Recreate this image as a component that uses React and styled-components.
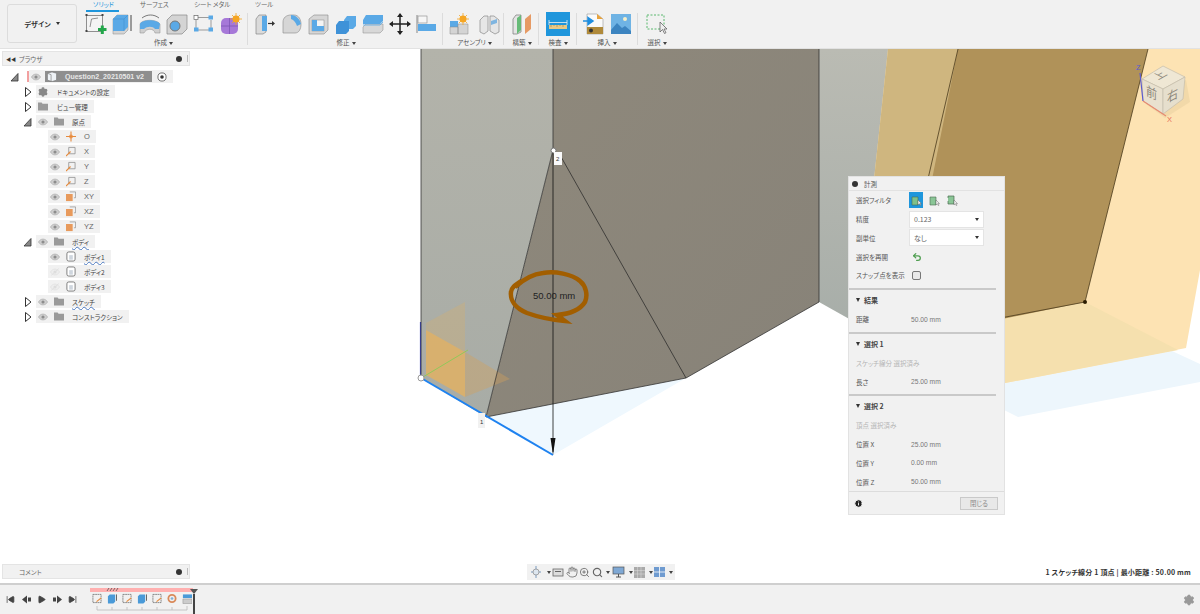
import React from "react";
import styled, { createGlobalStyle } from "styled-components";
import { SkipBack, SkipForward, Play, Settings, Info, Undo2, Hand, ZoomIn, Search } from "lucide-react";

const Global = createGlobalStyle`
  html, body { margin: 0; padding: 0; height: 100%; overflow: hidden; }
  #root { height: 100%; }
  * { box-sizing: border-box; }
  body {
    font-family: "Noto Sans CJK JP", "Liberation Sans", sans-serif;
    font-feature-settings: "palt";
    color: #444;
    background: #fff;
  }
`;

const Page = styled.div`
  width: 1200px;
  height: 614px;
  display: flex;
  flex-direction: column;
`;

/* ---------- toolbar ---------- */
const TopBar = styled.div`
  height: 49px;
  background: #f1f1f1;
  border-bottom: 1px solid #e2e2e2;
  display: flex;
  padding-left: 7px;
  flex: none;
  position: relative;
`;
const DesignBtn = styled.div`
  width: 70px;
  height: 39px;
  margin-top: 4px;
  margin-right: 8px;
  border: 1px solid #dcdcdc;
  border-radius: 3px;
  display: flex;
  align-items: center;
  justify-content: center;
  font-size: 7px;
  font-weight: 700;
  color: #333;
  gap: 3px;
`;
const Group = styled.div`
  display: flex;
  flex-direction: column;
  align-items: center;
  padding: 0 ${(p) => p.$pr}px 0 ${(p) => p.$pl}px;
  border-right: ${(p) => (p.$last ? "none" : "1px solid #dcdcdc")};
  margin-top: 13px;
  height: 32px;
`;
const IconRow = styled.div`
  display: flex;
  gap: ${(p) => p.$gap ?? 5}px;
  height: 22px;
  align-items: center;
`;
const GroupLabel = styled.div`
  font-size: 6.5px;
  line-height: 9px;
  color: #555;
  margin-top: 3px;
  white-space: nowrap;
`;
const Tabs = styled.div`
  position: absolute;
  top: 0;
  left: 86px;
  display: flex;
  font-size: 6.5px;
  line-height: 9px;
`;
const Tab = styled.div`
  width: ${(p) => p.$w}px;
  color: ${(p) => (p.$on ? "#1f96dc" : "#666")};
  padding-left: ${(p) => p.$pl ?? 0}px;
  & > i {
    display: block;
    width: 33px;
    height: 2px;
    background: #1f96dc;
    margin: 1px 0 0 -${(p) => p.$pl ?? 0}px;
  }
`;
const Caret = styled.span`
  display: inline-block;
  width: 0;
  height: 0;
  border-left: 2px solid transparent;
  border-right: 2px solid transparent;
  border-top: 3px solid ${(p) => p.$c ?? "#444"};
  margin-left: 2px;
  vertical-align: middle;
`;
const InspectIcon = styled.svg`
  width: 24px;
  height: 24px;
  margin-top: -1px;
`;

/* ---------- viewport ---------- */
const Viewport = styled.div`
  flex: 1;
  position: relative;
  background: #fff;
  overflow: hidden;
`;
const Scene = styled.svg`
  position: absolute;
  left: 0;
  top: 0;
  width: 1200px;
  height: 535px;
`;
const PanelBar = styled.div`
  position: absolute;
  left: 2px;
  width: 188px;
  height: 15px;
  background: #f1f1f1;
  border: 1px solid #e4e4e4;
  display: flex;
  align-items: center;
  padding: 0 1px 0 3px;
  font-size: 6.5px;
  color: #666;
  top: ${(p) => p.$top}px;
`;
const Collapse = styled.span`
  width: 13px;
  font-size: 5px;
  color: #333;
`;
const Dot = styled.span`
  width: 6px;
  height: 6px;
  border-radius: 50%;
  background: #333;
  margin-left: auto;
  margin-right: 5px;
`;
const Handle = styled.span`
  width: 1px;
  height: 7px;
  background: #bbb;
`;
const Tree = styled.div`
  position: absolute;
  left: 10px;
  top: 21px;
  display: flex;
  flex-direction: column;
  gap: 2px;
`;
const Row = styled.div`
  display: flex;
  align-items: center;
  height: 13px;
  padding-left: ${(p) => p.$indent}px;
`;
const Arrow = styled.svg`
  width: 10px;
  height: 12px;
  flex: none;
  margin-right: 3px;
`;
const Pin = styled.span`
  width: 2px;
  height: 11px;
  background: #f2a0a0;
  margin-left: 4px;
`;
const Pill = styled.div`
  display: flex;
  align-items: center;
  height: 13px;
  background: #f1f1f1;
  padding: 0 6px 0 2px;
  gap: 6px;
  font-size: 6.5px;
  color: #444;
  white-space: nowrap;
`;
const RowText = styled.span`
  margin-left: ${(p) => p.$ml ?? 2}px;
  font-family: ${(p) => (p.$latin ? '"Liberation Sans", sans-serif' : "inherit")};
  font-size: ${(p) => (p.$latin ? "7.5px" : "6.5px")};
  color: ${(p) => (p.$latin ? "#666" : "#444")};
  text-decoration: ${(p) => (p.$err ? "underline wavy #4a78c0 0.6px" : "none")};
`;
const RootName = styled.div`
  background: #8e8e8e;
  color: #e8e8e8;
  font-family: "Liberation Sans", sans-serif;
  font-size: 7px;
  font-weight: 700;
  height: 11px;
  width: 107px;
  display: flex;
  align-items: center;
  gap: 7px;
  padding-left: 1px;
  white-space: nowrap;
  margin-left: -2px;
  margin-right: -1px;
`;

/* measure dialog */
const Dialog = styled.div`
  position: absolute;
  left: 848px;
  top: 127px;
  width: 157px;
  height: 339px;
  background: #f1f1f1;
  border: 1px solid #e2e2e2;
  font-size: 6.5px;
  color: #555;
`;
const DialogHead = styled.div`
  height: 14px;
  display: flex;
  align-items: center;
  padding-left: 3px;
  gap: 6px;
  border-bottom: 1px solid #e2e2e2;
  & > span:first-child {
    width: 6px;
    height: 6px;
    border-radius: 50%;
    background: #333;
  }
`;
const FieldRow = styled.div`
  height: 18.75px;
  display: flex;
  align-items: center;
  padding-left: 7px;
  white-space: nowrap;
  & > label {
    width: ${(p) => (p.$wide ? "auto" : "54px")};
    flex: none;
  }
`;
const Value = styled.span`
  color: #777;
  font-family: "Liberation Sans", sans-serif;
  font-size: 6.7px;
  margin-left: 1px;
`;
const Select = styled.div`
  width: 75px;
  height: 17px;
  background: #fff;
  border: 1px solid #e4e4e4;
  display: flex;
  align-items: center;
  justify-content: space-between;
  padding: 0 4px;
  color: #666;
  font-size: 7px;
  margin-left: -1px;
`;
const Divider = styled.div`
  height: 2px;
  width: 147px;
  margin-top: 3px;
  background: #c9c9c9;
`;
const SectionHead = styled.div`
  height: 20px;
  display: flex;
  align-items: center;
  padding-left: 7px;
  font-weight: 700;
  font-size: 7px;
  color: #444;
  gap: 4px;
`;
const Tri = styled.span`
  width: 0;
  height: 0;
  border-left: 2.5px solid transparent;
  border-right: 2.5px solid transparent;
  border-top: 4px solid #333;
`;
const Muted = styled(FieldRow)`
  color: #b5b5b5;
`;
const DialogFoot = styled.div`
  position: absolute;
  left: 0;
  right: 0;
  bottom: 0;
  height: 23px;
  border-top: 1px solid #dcdcdc;
  display: flex;
  align-items: center;
  justify-content: space-between;
  padding: 0 6px 0 5px;
`;
const CloseBtn = styled.div`
  width: 38px;
  height: 13px;
  border: 1px solid #c9c9c9;
  background: #e8e8e8;
  color: #888;
  display: flex;
  align-items: center;
  justify-content: center;
`;
const FilterIcons = styled.div`
  display: flex;
  gap: 4px;
  margin-left: -1px;
  align-items: center;
`;
const FilterBtn = styled.div`
  width: 14px;
  height: 16px;
  display: flex;
  align-items: center;
  justify-content: center;
  background: ${(p) => (p.$on ? "#1f96dc" : "transparent")};
`;
const Check = styled.span`
  width: 9px;
  height: 9px;
  border: 1px solid #777;
  border-radius: 2px;
  background: #e8e8e8;
  margin-left: 2px;
`;
const Restart = styled(Undo2)`
  margin-left: 2px;
`;
const NavBar = styled.div`
  position: absolute;
  left: 527px;
  top: 515px;
  width: 148px;
  height: 16px;
  background: #f1f1f1;
  display: flex;
  align-items: center;
  justify-content: space-between;
  padding: 0 2px;
  color: #666;
`;
const Status = styled.div`
  position: absolute;
  right: 9px;
  top: 518px;
  font-size: 7px;
  font-weight: 700;
  color: #333;
  letter-spacing: 0.2px;
`;
const DimLabel = styled.text`
  font-family: "Liberation Sans", sans-serif;
  font-size: 9.5px;
  fill: #222;
`;

/* ---------- timeline ---------- */
const TimeBar = styled.div`
  height: 31px;
  flex: none;
  background: #f1f1f1;
  border-top: 2px solid #cfcfcf;
  display: flex;
  align-items: center;
  padding: 0 5px 0 6px;
`;
const Transport = styled.div`
  display: flex;
  gap: 6.5px;
  color: #444;
  align-items: center;
  width: 84px;
`;
const Track = styled.div`
  position: relative;
  width: 110px;
  height: 28px;
`;
const TrackRow = styled.div`
  position: absolute;
  left: 2px;
  top: 7px;
  display: flex;
  gap: 5px;
`;
const Head = styled.div`
  position: absolute;
  left: 100px;
  top: 3px;
  width: 8px;
  height: 25px;
  display: flex;
  flex-direction: column;
  align-items: center;
  &::before {
    content: "";
    border-left: 4px solid transparent;
    border-right: 4px solid transparent;
    border-top: 5px solid #555;
  }
  &::after {
    content: "";
    width: 2px;
    flex: 1;
    background: #444;
  }
`;
const Gear = styled.div`
  margin-left: auto;
  color: #999;
  display: flex;
`;

const Eye = ({ off }) => (
  <svg width="10" height="8" viewBox="0 0 11 8">
    <path d="M.5 4C2 1.6 3.6.8 5.5.8S9 1.6 10.5 4C9 6.4 7.4 7.2 5.5 7.2S2 6.4.5 4Z" fill={off ? "#eee" : "#cfcfcf"} stroke={off ? "#ddd" : "#aaa"} strokeWidth=".7" />
    <circle cx="5.5" cy="4" r="1.7" fill={off ? "#ddd" : "#8d8d8d"} />
    {off && <path d="M1.5 7.5 9.5.5" stroke="#ddd" />}
  </svg>
);
const Folder = () => (
  <svg width="10" height="9" viewBox="0 0 11 9">
    <path d="M0 0h4l1 1.5h6V9H0Z" fill="#9a9a9a" />
  </svg>
);
const Expand = ({ open }) => (
  <Arrow viewBox="0 0 10 12">
    {open ? (
      <path d="M1 10 8 2.5V10Z" fill="#888" stroke="#333" strokeWidth=".8" />
    ) : (
      <path d="M2.5 1.5 8 6 2.5 10.5Z" fill="#fff" stroke="#333" strokeWidth="1" />
    )}
  </Arrow>
);
const Origin = () => (
  <svg width="10" height="11" viewBox="0 0 11 11">
    <circle cx="5.5" cy="5.5" r="2.2" fill="#f0a060" />
    <path d="M5.5 0v11M0 5.5h11" stroke="#e68a3c" strokeWidth="1.2" />
  </svg>
);
const Axis = () => (
  <svg width="10" height="11" viewBox="0 0 11 11">
    <path d="M3 1h7v7H3Z" fill="none" stroke="#888" strokeWidth=".8" />
    <path d="M0 10.5 5 5.5" stroke="#e68a3c" strokeWidth="1.2" />
  </svg>
);
const PlaneIcon = () => (
  <svg width="10" height="11" viewBox="0 0 12 12">
    <path d="M4.5.5h7v7h-2" fill="none" stroke="#888" strokeWidth=".8" />
    <rect x="0" y="3" width="8" height="8.5" fill="#e89a5c" />
  </svg>
);
const BodyIcon = () => (
  <svg width="10" height="11" viewBox="0 0 11 11">
    <rect x="1" y=".5" width="9" height="10" rx="2" fill="#fff" stroke="#555" strokeWidth=".8" />
    <rect x="3.5" y="4" width="4" height="5" fill="#cfd6de" />
  </svg>
);
const CubeDoc = () => (
  <svg width="12" height="11" viewBox="0 0 12 12">
    <path d="M1 2.5 6 1l5 1.5V10L6 11.5 1 10Z" fill="#eef2f6" stroke="#777" strokeWidth=".7" />
    <path d="M1 2.5 5 4v7.5" fill="none" stroke="#777" strokeWidth=".7" />
  </svg>
);
const Radio = () => (
  <svg width="10" height="10" viewBox="0 0 11 11">
    <circle cx="5.5" cy="5.5" r="4.5" fill="#fff" stroke="#444" strokeWidth=".8" />
    <circle cx="5.5" cy="5.5" r="2" fill="#333" />
  </svg>
);

const blue = "#5aa9e6";
const ToolIcon = ({ children, w = 22 }) => (
  <svg width={w} height="22" viewBox={`0 0 ${w} 22`}>
    {children}
  </svg>
);

const Toolbar = () => (
  <TopBar>
    <DesignBtn>
      デザイン <Caret $c="#333" />
    </DesignBtn>
    <Tabs>
      <Tab $on $w="54" $pl="7">ソリッド<i /></Tab>
      <Tab $w="54">サーフェス</Tab>
      <Tab $w="61">シート メタル</Tab>
      <Tab $w="40">ツール</Tab>
    </Tabs>
    <Group $pl={0} $pr={5}>
      <IconRow>
        <ToolIcon>
          <rect x="1.5" y="2.5" width="16" height="16" fill="#f4f4f4" stroke="#666" strokeWidth=".7" />
          <path d="M5 14 6.5 6 13 5" fill="none" stroke="#666" strokeWidth=".7" />
          <path d="M.5 1h2v2h-2ZM16.5 1h2v2h-2ZM.5 17h2v2h-2Z" fill="#444" />
          <path d="M13 16.5h8.5M17.3 12.5v8.5" stroke="#22a64a" strokeWidth="3" />
        </ToolIcon>
        <ToolIcon>
          <path d="M1 6 5 2h11v15l-4 4H1Z" fill="#d4d4d4" stroke="#888" strokeWidth=".5" />
          <path d="M1 6 5 2h11v12l-4 4H1Z" fill={blue} />
          <path d="M12 6H1M12 6l4-4M12 6v12" stroke="#3d88c8" strokeWidth=".5" fill="none" />
          <path d="M19 2v16" stroke="#444" strokeWidth="1" />
        </ToolIcon>
        <ToolIcon>
          <path d="M1 11c2-5 17-5 20 0v9h-5c-1-5-9-5-11 0H1Z" fill="#cfcfcf" stroke="#888" strokeWidth=".5" />
          <path d="M1 11c2-5 17-5 20 0l-1 5h-4c-2-3-8-3-11 0H1Z" fill={blue} />
          <path d="M3 5c5-4 12-4 17 0" fill="none" stroke="#444" strokeWidth=".7" />
        </ToolIcon>
        <ToolIcon>
          <path d="M1 7 6 2h15v14l-5 5H1Z" fill="#d4d4d4" stroke="#888" strokeWidth=".7" />
          <circle cx="9" cy="13" r="5" fill={blue} stroke="#777" strokeWidth="1" />
        </ToolIcon>
        <ToolIcon>
          <path d="M5 4.5h11M3 7v8M18 7v8M5 17h11" stroke="#777" strokeWidth=".7" />
          <rect x="1" y="2.5" width="4" height="4" fill="#fff" stroke="#666" strokeWidth=".7" />
          <rect x="15.5" y="2.5" width="4.5" height="4" fill={blue} />
          <rect x="1" y="14.5" width="4.5" height="4" fill={blue} />
          <rect x="15.5" y="14.5" width="4.5" height="4" fill={blue} />
        </ToolIcon>
        <ToolIcon>
          <rect x="1" y="5" width="17" height="16" rx="5" fill="#a678d8" />
          <path d="M9.5 5v16M1 13h17" stroke="#7f55b5" strokeWidth=".8" />
          <circle cx="16" cy="6" r="3.5" fill="#f5a623" />
          <path d="M16 0v12M10 6h12M12 2l8 8M20 2l-8 8" stroke="#f5a623" strokeWidth=".8" />
        </ToolIcon>
      </IconRow>
      <GroupLabel>作成<Caret /></GroupLabel>
    </Group>
    <Group $pl={6} $pr={4}>
      <IconRow>
        <ToolIcon>
          <path d="M2 6 5 2h7v17l-3 2H2Z" fill="#dadada" stroke="#777" strokeWidth=".6" />
          <path d="M8 3h5v15H8Z" fill={blue} />
          <path d="M14 10.5h6" stroke="#333" strokeWidth="1.2" />
          <path d="m18 8 3 2.5-3 2.5Z" fill="#333" />
        </ToolIcon>
        <ToolIcon>
          <path d="M2 20V9c0-4 3-7 8-7h3c5 0 7 5 7 9 0 5-2 9-6 9Z" fill="#d6d6d6" stroke="#888" strokeWidth=".6" />
          <path d="M10 2c5 0 9 4 10 9l-4 2c-1-3-3-6-6-7Z" fill={blue} />
        </ToolIcon>
        <ToolIcon>
          <path d="M1 6 6 2h14v15l-4 4H1Z" fill="#d6d6d6" stroke="#888" strokeWidth=".6" />
          <rect x="4" y="7" width="12" height="11" fill="#f4f4f4" stroke="#888" strokeWidth=".5" />
          <path d="M4 7h5v6h7v5H4Z" fill={blue} />
        </ToolIcon>
        <ToolIcon>
          <path d="M9 7 12 3h9v10l-3 3H9Z" fill={blue} />
          <path d="M1 12 4 8h10v10l-3 3H1Z" fill="#3f92d8" />
        </ToolIcon>
        <ToolIcon>
          <path d="M1 14 4 11h17v6l-3 3H1Z" fill="#d8d8d8" stroke="#888" strokeWidth=".5" />
          <path d="M1 7 4 2h17v6l-3 3H1Z" fill={blue} />
          <path d="M1 12h17l3-3" fill="none" stroke={blue} strokeWidth=".8" />
        </ToolIcon>
        <ToolIcon>
          <path d="M11 1v20M1 11h20" stroke="#222" strokeWidth="1.5" />
          <path d="m11 0 3 4H8ZM11 22l-3-4h6ZM0 11l4-3v6ZM22 11l-4 3V8Z" fill="#222" />
        </ToolIcon>
        <ToolIcon>
          <path d="M1 2v18" stroke="#999" strokeWidth="1.2" />
          <rect x="2" y="3" width="9" height="7" fill="#f6f6f6" stroke="#888" strokeWidth=".6" />
          <rect x="2" y="11" width="18" height="7" fill={blue} />
        </ToolIcon>
      </IconRow>
      <GroupLabel>修正<Caret /></GroupLabel>
    </Group>
    <Group $pl={6} $pr={3}>
      <IconRow $gap={7}>
        <ToolIcon>
          <path d="M1 8h8v6H1Z" fill={blue} />
          <path d="M1 14h8v7H1ZM9 11h10v10H9Z" fill="#d4d4d4" stroke="#888" strokeWidth=".5" />
          <circle cx="14" cy="6" r="3.5" fill="#f5a623" />
          <path d="M14 0v12M8 6h12M10 2l8 8M18 2l-8 8" stroke="#f5a623" strokeWidth=".8" />
        </ToolIcon>
        <ToolIcon>
          <path d="M2 7 6 3h4v15L6 21l-4-2ZM12 3h4l5 4v12l-4 2-5-3Z" fill="#e6e6e6" stroke="#888" strokeWidth=".7" />
          <path d="M13 8l6-2v4l-6 2Z" fill="#7fb5e0" />
        </ToolIcon>
      </IconRow>
      <GroupLabel>アセンブリ<Caret /></GroupLabel>
    </Group>
    <Group $pl={8} $pr={6}>
      <IconRow>
        <ToolIcon w={20}>
          <path d="M1 6 4 2h5v17l-4 2H1Z" fill="#e4e4e4" stroke="#777" strokeWidth=".7" />
          <path d="M5 5 9 2v15l-4 4Z" fill="#66bb77" />
          <path d="M13 6 19 1v15l-6 5Z" fill="#e69a64" />
        </ToolIcon>
      </IconRow>
      <GroupLabel>構築<Caret /></GroupLabel>
    </Group>
    <Group $pl={7} $pr={6}>
      <IconRow>
        <InspectIcon viewBox="0 0 24 24">
          <rect width="24" height="24" fill="#1f96dc" />
          <path d="M3 8v5M21 8v5M3 10.5h18" stroke="#eee" strokeWidth=".8" />
          <rect x="3" y="13" width="18" height="4" fill="#e7c986" />
          <path d="M5 13v2M8 13v1M11 13v2M14 13v1M17 13v2" stroke="#8a6f3a" strokeWidth=".5" />
        </InspectIcon>
      </IconRow>
      <GroupLabel>検査<Caret /></GroupLabel>
    </Group>
    <Group $pl={6} $pr={6}>
      <IconRow $gap={6}>
        <ToolIcon>
          <path d="M4 1h10l6 5v15H4Z" fill="#fafafa" stroke="#999" strokeWidth=".6" />
          <path d="M14 1v5h6Z" fill="#e8a33c" />
          <rect x="4" y="14" width="16" height="7" fill="#b08a3a" />
          <circle cx="8" cy="17.5" r="2" fill="#333" />
          <path d="M0 8h7M5 4.5 10 8l-5 3.5Z" fill="#1f8ee0" stroke="#1f8ee0" strokeWidth="1.5" />
        </ToolIcon>
        <svg width="20" height="20" viewBox="0 0 20 20">
          <rect width="20" height="20" fill="#6fb3e4" />
          <path d="M0 16 6 9l5 5 3-2 6 5v3H0Z" fill="#3c84c0" />
          <circle cx="14" cy="5" r="2" fill="#f6efc8" />
        </svg>
      </IconRow>
      <GroupLabel>挿入<Caret /></GroupLabel>
    </Group>
    <Group $pl={8} $pr={8} $last>
      <IconRow>
        <ToolIcon>
          <rect x="1" y="2" width="17" height="14" fill="none" stroke="#5ab86e" strokeDasharray="2 1.5" />
          <path d="M14 9v10l2.500-2.500 2 4 1.500-.8-2-3.700H21Z" fill="#eee" stroke="#555" strokeWidth=".7" />
        </ToolIcon>
      </IconRow>
      <GroupLabel>選択<Caret /></GroupLabel>
    </Group>
  </TopBar>
);

const Model = () => (
  <Scene viewBox="0 49 1200 535">
    <defs>
      <linearGradient id="left" x1="0" y1="0" x2="0" y2="1">
        <stop offset="0" stopColor="#b3b3aa" />
        <stop offset="1" stopColor="#a8aca6" />
      </linearGradient>
      <linearGradient id="wall" x1="0" y1="0" x2="0" y2="1">
        <stop offset="0" stopColor="#babbb3" />
        <stop offset="1" stopColor="#a8aea9" />
      </linearGradient>
      <linearGradient id="mid" x1="0" y1="0" x2="1" y2="1">
        <stop offset="0" stopColor="#8f897c" />
        <stop offset="1" stopColor="#878278" />
      </linearGradient>
    </defs>
    {/* ground plane tint */}
    <path d="M1172 351 1200 364V382L1018 417 1000 408V384Z" fill="#edf6fc" />
    <path d="M486 417 686 378 553 455Z" fill="#eff8fe" />
    {/* grey wall */}
    <path d="M819 49H890L860 325 819 302Z" fill="url(#wall)" />
    {/* yellow plane */}
    <path d="M888 49H1200V270L1186 348 1000 384 850 400 860 310Z" fill="#fde3b3" />
    <path d="M1085 302 1178 350 1000 384 1000 317Z" fill="#f5e0ae" />
    <path d="M888 49H960V340L850 340 860 310Z" fill="#cfb67f" />
    {/* dark and light faces */}
    <path d="M553 49H819V302L686 378 486 417 553 150Z" fill="url(#mid)" />
    <path d="M421 49H553V150L486 417 421 378Z" fill="url(#left)" />
    {/* brown face */}
    <path d="M958 49H1148L1085 302 900 340Z" fill="#b09259" />
    <path d="M958 49 900 300M1148 49 1085 302 990 320" fill="none" stroke="#4a3a1c" strokeWidth=".8" />
    {/* origin widget */}
    <path d="M426 323 465 302V352L426 330Z" fill="#d9b068" opacity=".3" />
    <path d="M426 330 465 352V397L426 375Z" fill="#e0b064" opacity=".85" />
    <path d="M465 352 510 379 465 397Z" fill="#d3a05c" opacity=".4" />
    <path d="M423 377 468 350" stroke="#92c85a" strokeWidth="1" />
    <path d="M420.5 322V378" stroke="#3c46c8" strokeWidth="1.2" />
    {/* edges */}
    <path d="M421 49V378M553 49V150M819 49V302L686 378 486 417" fill="none" stroke="#333" strokeWidth=".8" />
    <path d="M553 150 486 417M560 155 686 378" fill="none" stroke="#222" strokeWidth=".7" />
    <path d="M421 378 553 455" stroke="#1e82f0" strokeWidth="2" />
    <path d="M553 150V452" stroke="#111" strokeWidth=".8" />
    <path d="m553 455-2.5-17h5Z" fill="#111" />
    <circle cx="421" cy="378" r="3" fill="#fff" stroke="#999" />
    <circle cx="553.5" cy="150.5" r="2.5" fill="#fff" stroke="#777" />
    <circle cx="1085" cy="302" r="2" fill="#2a1c00" />
    {/* hand-drawn circle */}
    <path d="M521 281C515 285 511 288 511 292 510 300 515 308 527 313 538 317 553 320 565 321L557 315C568 314 580 310 585 302 588 295 586 286 580 281 572 274 555 271 543 273 533 274 525 278 515 287" fill="none" stroke="#a25e00" strokeWidth="4.5" />
    <DimLabel x="533" y="298.5">50.00 mm</DimLabel>
    {/* point tags */}
    <rect x="554" y="152" width="8" height="13" fill="#fafafa" />
    <text x="556" y="161" fontSize="6" fontFamily="Liberation Sans" fill="#333">2</text>
    <rect x="478" y="413" width="7" height="15" fill="#f1f1f1" />
    <text x="480" y="424" fontSize="6" fontFamily="Liberation Sans" fill="#333">1</text>
    {/* view cube */}
    <path d="M1146 104 1165 118 1190 102 1186 80Z" fill="#e8cf9f" opacity=".5" />
    <path d="M1142 79 1163 66 1185 77 1163 89Z" fill="#efe7d4" stroke="#c4bdac" strokeWidth=".7" />
    <path d="M1142 79 1163 89 1163 114 1143 101Z" fill="#e9e1cf" stroke="#c4bdac" strokeWidth=".7" />
    <path d="M1163 89 1185 77 1183 99 1163 114Z" fill="#e6dfcd" stroke="#c4bdac" strokeWidth=".7" />
    <text transform="matrix(.9 -.5 .9 .45 1158 80)" fontSize="11" fill="#8d877a" fontFamily="Noto Sans CJK JP">上</text>
    <text transform="matrix(.85 .4 0 1 1146 95)" fontSize="13" fill="#8d877a" fontFamily="Noto Sans CJK JP">前</text>
    <text transform="matrix(.85 -.45 0 1 1167 103)" fontSize="13" fill="#8d877a" fontFamily="Noto Sans CJK JP">右</text>
    <path d="M1140 73 1143 101" stroke="#5a5ad0" strokeWidth="1.2" />
    <path d="M1143 101 1166 116" stroke="#e88a70" strokeWidth="1.2" />
    <text x="1136" y="70" fontSize="7.5" fill="#5a5ad0" fontFamily="Liberation Sans">Z</text>
    <text x="1167" y="122" fontSize="7.5" fill="#e8705a" fontFamily="Liberation Sans">X</text>
  </Scene>
);

const BrowserTree = () => (
  <Tree>
    <Row $indent={0}>
      <Expand open />
      <Pin />
      <Pill>
        <Eye />
        <RootName><CubeDoc />Question2_20210501 v2</RootName>
        <Radio />
      </Pill>
    </Row>
    <Row $indent={13}>
      <Expand />
      <Pill><Settings size={10} color="#888" strokeWidth={3} fill="#888" /><RowText $ml={3}>ドキュメントの設定</RowText></Pill>
    </Row>
    <Row $indent={13}>
      <Expand />
      <Pill><Folder /><RowText $ml={3}>ビュー管理</RowText></Pill>
    </Row>
    <Row $indent={13}>
      <Expand open />
      <Pill><Eye /><Folder /><RowText>原点</RowText></Pill>
    </Row>
    <Row $indent={38}><Pill><Eye /><Origin /><RowText $latin>O</RowText></Pill></Row>
    <Row $indent={38}><Pill><Eye /><Axis /><RowText $latin>X</RowText></Pill></Row>
    <Row $indent={38}><Pill><Eye /><Axis /><RowText $latin>Y</RowText></Pill></Row>
    <Row $indent={38}><Pill><Eye /><Axis /><RowText $latin>Z</RowText></Pill></Row>
    <Row $indent={38}><Pill><Eye /><PlaneIcon /><RowText $latin>XY</RowText></Pill></Row>
    <Row $indent={38}><Pill><Eye /><PlaneIcon /><RowText $latin>XZ</RowText></Pill></Row>
    <Row $indent={38}><Pill><Eye /><PlaneIcon /><RowText $latin>YZ</RowText></Pill></Row>
    <Row $indent={13}>
      <Expand open />
      <Pill><Eye /><Folder /><RowText $err>ボディ</RowText></Pill>
    </Row>
    <Row $indent={38}><Pill><Eye /><BodyIcon /><RowText $err>ボディ1</RowText></Pill></Row>
    <Row $indent={38}><Pill><Eye off /><BodyIcon /><RowText>ボディ2</RowText></Pill></Row>
    <Row $indent={38}><Pill><Eye off /><BodyIcon /><RowText>ボディ3</RowText></Pill></Row>
    <Row $indent={13}>
      <Expand />
      <Pill><Eye /><Folder /><RowText $err>スケッチ</RowText></Pill>
    </Row>
    <Row $indent={13}>
      <Expand />
      <Pill><Eye /><Folder /><RowText>コンストラクション</RowText></Pill>
    </Row>
  </Tree>
);

const FilterIcon = ({ on, kind }) => (
  <svg width="11" height="11" viewBox="0 0 11 11">
    {kind === "edge" ? (
      <path d="M1 3V1h6v8H1V6" fill="#8ac596" stroke="#4a6b50" strokeWidth=".7" />
    ) : (
      <path d="M1 2h6v8H1Z" fill={on ? "#7fc08a" : "#8ac596"} stroke="#4a6b50" strokeWidth=".6" />
    )}
    <path d="M7 5v5l1.3-1.2 1 1.800.7-.4-.9-1.700H10.500Z" fill="#eee" stroke="#555" strokeWidth=".4" />
  </svg>
);

const Measure = () => (
  <Dialog>
    <DialogHead><span />計測</DialogHead>
    <FieldRow>
      <label>選択フィルタ</label>
      <FilterIcons>
        <FilterBtn $on><FilterIcon on /></FilterBtn>
        <FilterBtn><FilterIcon /></FilterBtn>
        <FilterBtn><FilterIcon kind="edge" /></FilterBtn>
      </FilterIcons>
    </FieldRow>
    <FieldRow><label>精度</label><Select>0.123<Caret $c="#333" /></Select></FieldRow>
    <FieldRow><label>副単位</label><Select>なし<Caret $c="#333" /></Select></FieldRow>
    <FieldRow><label>選択を再開</label><Restart size={10} color="#4f9e50" strokeWidth={3} /></FieldRow>
    <FieldRow><label>スナップ点を表示</label><Check /></FieldRow>
    <Divider />
    <SectionHead><Tri />結果</SectionHead>
    <FieldRow><label>距離</label><Value>50.00 mm</Value></FieldRow>
    <Divider />
    <SectionHead><Tri />選択 1</SectionHead>
    <Muted $wide><label>スケッチ線分 選択済み</label></Muted>
    <FieldRow><label>長さ</label><Value>25.00 mm</Value></FieldRow>
    <Divider />
    <SectionHead><Tri />選択 2</SectionHead>
    <Muted $wide><label>頂点 選択済み</label></Muted>
    <FieldRow><label>位置 X</label><Value>25.00 mm</Value></FieldRow>
    <FieldRow><label>位置 Y</label><Value>0.00 mm</Value></FieldRow>
    <FieldRow><label>位置 Z</label><Value>50.00 mm</Value></FieldRow>
    <DialogFoot>
      <Info size={9} color="#fff" fill="#222" strokeWidth={2.5} />
      <CloseBtn>閉じる</CloseBtn>
    </DialogFoot>
  </Dialog>
);

const Nav = () => (
  <NavBar>
    <svg width="14" height="12" viewBox="0 0 14 12"><path d="M7 0v12M2 6h10" stroke="#7a9bc0" /><circle cx="7" cy="6" r="3" fill="#dde6ef" stroke="#888" strokeWidth=".7" /></svg>
    <Caret />
    <svg width="12" height="10" viewBox="0 0 12 10"><rect x="1" y="2" width="10" height="7" fill="#ddd" stroke="#666" strokeWidth=".8" /><rect x="3" y="4" width="6" height="1" fill="#666" /></svg>
    <Hand size={12} strokeWidth={1.5} />
    <ZoomIn size={11} strokeWidth={1.8} />
    <Search size={11} strokeWidth={2.5} />
    <Caret />
    <svg width="13" height="12" viewBox="0 0 13 12"><rect x="1" y="1" width="11" height="7" fill="#7fa8d4" stroke="#555" strokeWidth=".7" /><path d="M6.5 8v3M4 11h5" stroke="#555" /></svg>
    <Caret />
    <svg width="11" height="11" viewBox="0 0 11 11"><rect width="11" height="11" fill="#aaa" /><path d="M3.5 0v11M7 0v11M0 3.5h11M0 7h11" stroke="#ddd" strokeWidth=".5" /></svg>
    <Caret />
    <svg width="11" height="10" viewBox="0 0 11 10"><rect width="11" height="10" fill="#6f9bd0" /><path d="M5.5 0v10M0 5h11" stroke="#fff" strokeWidth=".8" /></svg>
    <Caret />
  </NavBar>
);

const Sketch = () => (
  <svg width="10" height="11" viewBox="0 0 11 11">
    <rect x="1" y="1" width="9" height="9" fill="none" stroke="#555" strokeWidth=".7" strokeDasharray="2 .5" />
    <path d="M5 9 10 5" stroke="#e68a3c" strokeWidth="1.2" />
  </svg>
);
const Extrude = () => (
  <svg width="10" height="11" viewBox="0 0 11 11">
    <path d="M1 3 3 1h6v8l-2 2H1Z" fill="#4a9ad8" />
    <path d="M10.5 1v7" stroke="#555" />
  </svg>
);
const Fillet = () => (
  <svg width="10" height="11" viewBox="0 0 11 11">
    <circle cx="5.5" cy="5.5" r="4" fill="none" stroke="#d98a5a" strokeWidth="2" />
    <circle cx="5.5" cy="5.5" r="1.5" fill="#7fb0d8" />
  </svg>
);
const Split = () => (
  <svg width="10" height="11" viewBox="0 0 11 11">
    <path d="M1 1h10v4H1Z" fill="#4a9ad8" />
    <path d="M1 6h10v5H1Z" fill="#ccc" stroke="#888" strokeWidth=".5" />
  </svg>
);

const Timeline = () => (
  <TimeBar>
    <Transport>
      <SkipBack size={9} fill="#444" strokeWidth={2} />
      <svg width="9" height="9" viewBox="0 0 9 9"><path d="M0 4.5 5 .5v8ZM6 2.5h3v4H6Z" fill="#444" /></svg>
      <Play size={9} fill="#444" />
      <svg width="9" height="9" viewBox="0 0 9 9"><path d="M9 4.5 4 .5v8ZM0 2.5h3v4H0Z" fill="#444" /></svg>
      <SkipForward size={9} fill="#444" strokeWidth={2} />
    </Transport>
    <Track>
      <svg width="110" height="28" viewBox="0 0 110 28">
        <rect x="0" y="2" width="103" height="4" fill="#ffb0b0" />
        <path d="M17 5l2-3M20 5l2-3M23 5l2-3M26 5l2-3" stroke="#444" strokeWidth=".7" />
        <path d="M7 20v4h90v-4M22 24v-3M37 24v-3M52 24v-3M67 24v-3M82 24v-3" fill="none" stroke="#bbb" strokeWidth=".8" />
      </svg>
      <TrackRow>
        <Sketch /><Extrude /><Sketch /><Extrude /><Sketch /><Fillet /><Split />
      </TrackRow>
      <Head />
    </Track>
    <Gear><Settings size={12} fill="#999" /></Gear>
  </TimeBar>
);

export default function App() {
  return (
    <Page>
      <Global />
      <Toolbar />
      <Viewport>
        <Model />
        <PanelBar $top={2}>
          <Collapse>◀◀</Collapse>ブラウザ<Dot /><Handle />
        </PanelBar>
        <BrowserTree />
        <PanelBar $top={515}>
          <Collapse />コメント<Dot /><Handle />
        </PanelBar>
        <Measure />
        <Nav />
        <Status>1 スケッチ線分 1 頂点 | 最小距離 : 50.00 mm</Status>
      </Viewport>
      <Timeline />
    </Page>
  );
}
